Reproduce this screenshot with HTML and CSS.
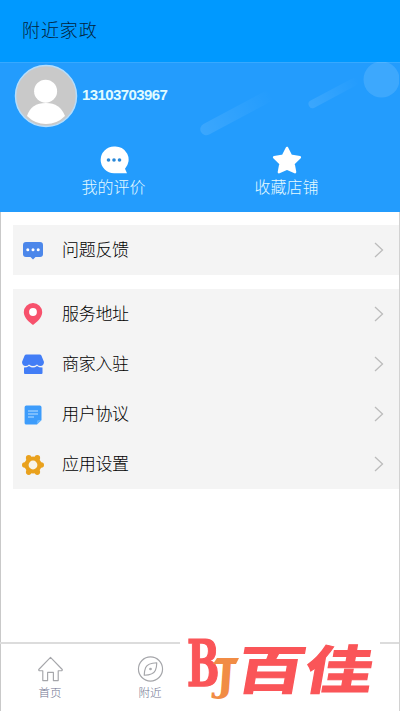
FILE: index.html
```html
<!DOCTYPE html>
<html lang="zh-CN">
<head>
<meta charset="utf-8">
<title>附近家政</title>
<link rel="stylesheet" href="styles.css">
</head>
<body>
<div class="app">
  <header class="titlebar">附近家政</header>
  <section class="hero">
    <svg class="hero-art" width="398" height="150" viewBox="1 62 398 150">
      <defs>
        <linearGradient id="fade" x1="0" x2="1" y1="0" y2="0"><stop offset="0" stop-color="#fff" stop-opacity=".11"/><stop offset="1" stop-color="#fff" stop-opacity="0"/></linearGradient>
      </defs>
      <circle cx="381.500" cy="79.500" r="18" fill="#fff" opacity=".12"/>
      <rect x="0" y="-6" width="80" height="12" rx="6" fill="url(#fade)" transform="translate(201 132) rotate(-28)"/>
      <rect x="0" y="-4" width="56" height="8" rx="4" fill="url(#fade)" transform="translate(309 106) rotate(-28)"/>
    </svg>
    <div class="profile">
      <svg class="avatar" width="64" height="64" viewBox="0 0 64 64">
        <circle cx="32" cy="32" r="30.500" fill="#c9c9c9" stroke="#b5ddfc" stroke-width="1.500"/>
        <circle cx="31.600" cy="27.200" r="11.500" fill="#fff"/>
        <path d="M13 52Q17 39 32 39Q46 39 51 52Q43 60 32 60Q21 60 13 52Z" fill="#fff"/>
      </svg>
      <span class="phone">13103703967</span>
    </div>
    <div class="shortcuts">
      <div class="shortcut">
        <svg width="30" height="30" viewBox="0 0 30 30"><path d="M15 1.500a13.200 13.200 0 1 0 0 26.700H28l-2-4.500A13.200 13.200 0 0 0 15 1.500Z" fill="#fff"/><g fill="#2a88d8"><circle cx="9.500" cy="15" r="1.800"/><circle cx="15" cy="15" r="1.800"/><circle cx="20.500" cy="15" r="1.800"/></g></svg>
        <span>我的评价</span>
      </div>
      <div class="shortcut">
        <svg width="30" height="30" viewBox="0 0 30 30"><path d="M15 3l3.800 7.700 9 1.500-6.400 6.300 1.600 8.600-8-3.600-8 3.600 1.600-8.600L2.200 12.200l9-1.500Z" fill="#fff" stroke="#fff" stroke-width="2.600" stroke-linejoin="round"/></svg>
        <span>收藏店铺</span>
      </div>
    </div>
  </section>
  <main class="menus">
    <div class="menu">
      <div class="row">
        <svg class="icon" width="24" height="24" viewBox="0 0 24 24"><path d="M5 4h14q3 0 3 3v9q0 3-3 3h-4.500L12 21.600 9.500 19H5q-3 0-3-3V7q0-3 3-3Z" fill="#4c87ea"/><g fill="#fff"><circle cx="6.800" cy="11.700" r="1.500"/><circle cx="12" cy="11.700" r="1.500"/><circle cx="17.200" cy="11.700" r="1.500"/></g></svg>
        <span class="label">问题反馈</span>
        <svg class="arrow" width="10" height="16" viewBox="0 0 10 16"><path d="M1 1l7.500 7L1 15"/></svg>
      </div>
    </div>
    <div class="menu">
      <div class="row">
        <svg class="icon" width="24" height="24" viewBox="0 0 24 24"><path d="M12 1a9.200 9.200 0 0 0-9.200 9.200C2.800 16 9 20.500 12 23c3-2.500 9.200-7 9.200-12.800A9.200 9.200 0 0 0 12 1Z" fill="#f7516c"/><circle cx="12" cy="10" r="3.900" fill="#fff"/></svg>
        <span class="label">服务地址</span>
        <svg class="arrow" width="10" height="16" viewBox="0 0 10 16"><path d="M1 1l7.500 7L1 15"/></svg>
      </div>
      <div class="row">
        <svg class="icon" width="24" height="24" viewBox="0 0 24 24"><path d="M5.500 2.500h13q1.500 0 2 1.300L23 10q-.3 4-3.500 4-2 0-3.500-1.600Q14 14 12 14t-4-1.600Q6.500 14 4.500 14 1.300 14 1 10l2.500-6.200q.5-1.300 2-1.300Z" fill="#427df6"/><path d="M3 15.500q3 0 5-1.500 4 3 8 0 2 1.500 5.500 1.500V21q0 1-1 1h-16.500q-1 0-1-1Z" fill="#427df6"/></svg>
        <span class="label">商家入驻</span>
        <svg class="arrow" width="10" height="16" viewBox="0 0 10 16"><path d="M1 1l7.500 7L1 15"/></svg>
      </div>
      <div class="row">
        <svg class="icon" width="24" height="24" viewBox="0 0 24 24"><path d="M5.300 3.500h13.500q1.700 0 1.700 1.700V18l-4.600 4.600H5.300q-1.700 0-1.700-1.700V5.200q0-1.700 1.700-1.700Z" fill="#3d9cfb"/><path d="M20.500 18l-4.600 4.600V20q0-2 2-2Z" fill="#65b5ff"/><path d="M7 9h10M7 12h10M7 15h6" stroke="#b9ddff" stroke-width="1.200"/></svg>
        <span class="label">用户协议</span>
        <svg class="arrow" width="10" height="16" viewBox="0 0 10 16"><path d="M1 1l7.500 7L1 15"/></svg>
      </div>
      <div class="row">
        <svg class="icon" width="24" height="24" viewBox="0 0 24 24"><g fill="#e9a11d"><circle cx="12" cy="13" r="8.600"/><circle cx="3.800" cy="13" r="2.800"/><circle cx="20.200" cy="13" r="2.800"/><circle cx="7.700" cy="5.900" r="2.800"/><circle cx="16.300" cy="5.900" r="2.800"/><circle cx="7.700" cy="20.100" r="2.800"/><circle cx="16.300" cy="20.100" r="2.800"/></g><circle cx="12" cy="13" r="4.400" fill="#f8f4e8"/></svg>
        <span class="label">应用设置</span>
        <svg class="arrow" width="10" height="16" viewBox="0 0 10 16"><path d="M1 1l7.500 7L1 15"/></svg>
      </div>
    </div>
  </main>
  <nav class="tabs">
    <div class="tab">
      <svg width="28" height="28" viewBox="0 0 28 28"><path d="M14 2L1.800 14.500q-.2 1.300 1 1.300H6V26h5v-8.500h6V26h5V15.800h3.200q1.200 0 1-1.300Z"/></svg>
      <span>首页</span>
    </div>
    <div class="tab">
      <svg width="28" height="28" viewBox="0 0 28 28"><circle cx="14" cy="14" r="12.500"/><path d="M20.500 7.500Q11 8 9 12.500 7.500 16 7.500 20.500 17 20 19 15.500q1.500-3.500 1.500-8Z"/><circle cx="14" cy="14" r=".8"/></svg>
      <span>附近</span>
    </div>
  </nav>
  <div class="brand">
    <svg width="200" height="96" viewBox="180 615 200 96">
      <text class="brand-b" transform="translate(187 686) scale(.6 .98)">B</text>
      <text class="brand-j" transform="translate(215 690) skewX(-4) scale(.95 1)">J</text>
      <path d="M217 658h22l-3 6h-23Z" fill="#f18c45"/>
      <text class="brand-name" transform="translate(234 688.500) skewX(-10) scale(1.310 1)">百佳</text>
    </svg>
  </div>
</div>
</body>
</html>
```
FILE: styles.css
```css
* { box-sizing: border-box; }
body {
  margin: 0;
  background: #fff;
  color: #000;
  font-family: "Liberation Sans", "Noto Sans CJK SC", sans-serif;
}
.app {
  position: relative;
  display: flex;
  flex-direction: column;
  height: 711px;
  border-left: 1px solid #c9c9c9;
  border-right: 1px solid #d2d2d2;
}
.titlebar {
  height: 62px;
  flex: none;
  margin: 0 -1px;
  padding-left: 22px;
  line-height: 63px;
  font-size: 18px;
  font-weight: 300;
  letter-spacing: .9px;
  color: #03233d;
  background: #0099ff;
}
.hero {
  position: relative;
  height: 150px;
  flex: none;
  margin: 0 -1px;
  padding: 1px 1px 0;
  border-top: 1px solid #37a9ff;
  background: #239cfd;
}
.hero-art { position: absolute; top: -1px; left: 1px; }
.profile { position: relative; display: flex; height: 64px; padding-left: 13px; }
.phone {
  margin: 21px 0 0 4px;
  font-size: 15px;
  line-height: 20px;
  font-weight: 700;
  letter-spacing: -.6px;
  color: #e0fbff;
}
.shortcuts { position: relative; display: flex; padding: 17px 26px 0 26px; }
.shortcut {
  flex: 1;
  display: flex;
  flex-direction: column;
  align-items: center;
  font-size: 16px;
  line-height: 26px;
  font-weight: 300;
  color: #e6faff;
}
.menus { flex: 1; padding: 13px 0 0 12px; }
.menu { margin-bottom: 14px; background: #f4f4f4; }
.row { display: flex; align-items: center; height: 50px; padding: 0 15px 0 8px; }
.icon { flex: none; }
.label {
  flex: 1;
  margin-left: 17px;
  padding-top: 2px;
  font-size: 17px;
  line-height: 24px;
  font-weight: 300;
  letter-spacing: -.3px;
}
.arrow { fill: none; stroke: #bcbcbc; stroke-width: 1.3; }
.tabs {
  height: 69px;
  flex: none;
  display: flex;
  margin-left: -1px;
  padding-top: 11px;
  border-top: 2px solid #dcdcdc;
}
.tab {
  width: 100px;
  display: flex;
  flex-direction: column;
  align-items: center;
  font-size: 11.5px;
  line-height: 20px;
  font-weight: 300;
  color: #70748f;
}
.tab svg { width: 27px; height: 28px; fill: none; stroke: #a5a6aa; stroke-width: 1.2; stroke-linejoin: round; }
.brand { position: absolute; left: 179px; top: 615px; width: 200px; height: 96px; background: #fff; }
.brand svg { display: block; overflow: visible; }
.brand-b { font: 700 64px "DejaVu Serif", serif; fill: #fa5558; stroke: #fa5558; stroke-width: 1.5px; }
.brand-j {
  font: 700 43px "DejaVu Serif", serif;
  fill: #f18c45;
  stroke: #fff;
  stroke-width: 3px;
  paint-order: stroke;
}
.brand-name {
  font: 700 52px "Noto Sans CJK SC", sans-serif;
  fill: #fa5558;
  stroke: #fa5558;
  stroke-width: 1px;
}
```
